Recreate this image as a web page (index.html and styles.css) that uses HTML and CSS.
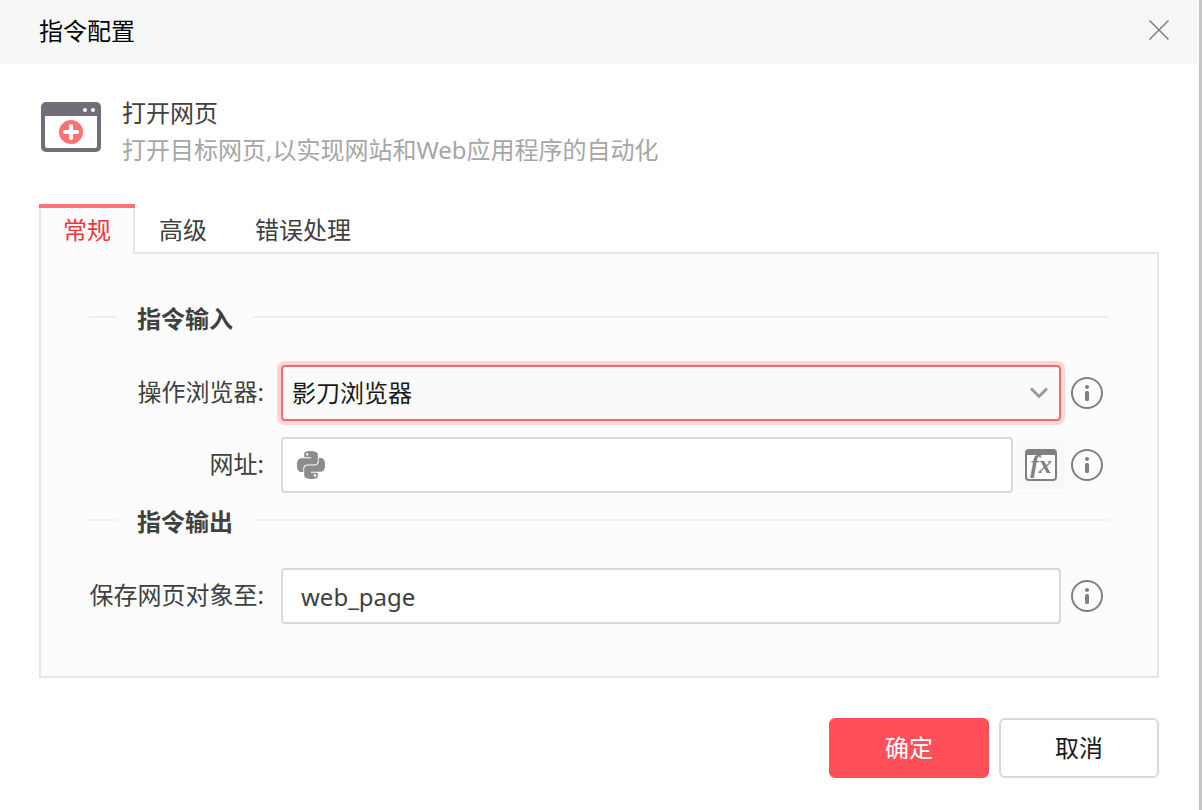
FILE: index.html
```html
<!DOCTYPE html>
<html lang="zh-CN">
<head>
<meta charset="utf-8">
<meta name="viewport" content="width=device-width, initial-scale=1">
<title>指令配置</title>
<link rel="stylesheet" href="styles.css">
</head>
<body>
<svg class="sprite" aria-hidden="true">
  <symbol id="info" viewBox="0 0 32 32">
    <circle cx="16" cy="16" r="15" fill="none" stroke="#808080" stroke-width="2"/>
    <circle cx="16" cy="10" r="2.1" fill="#808080"/>
    <rect x="14" y="14" width="4" height="10" rx="1.6" fill="#808080"/>
  </symbol>
</svg>
<main class="dialog">
  <header class="titlebar">
    <h1 class="titlebar-text">指令配置</h1>
    <button class="icon-button close" type="button" aria-label="关闭">
      <svg width="20" height="20" viewBox="0 0 20 20"><path d="M.5.5l19 19M19.5.5l-19 19" fill="none" stroke="#808080" stroke-width="1.5"/></svg>
    </button>
  </header>

  <form class="content">
    <section class="summary">
      <svg class="summary-icon" width="60" height="50" viewBox="0 0 60 50" aria-hidden="true">
        <rect width="60" height="50" rx="5" fill="#706e78"/>
        <path d="M4 14h52v30q0 2-2 2H6q-2 0-2-2z" fill="#fff"/>
        <circle cx="44" cy="8" r="2" fill="#fff"/><circle cx="52" cy="8" r="2" fill="#fff"/>
        <circle cx="30" cy="30" r="12" fill="#ff7373"/>
        <path d="M30 24v12M24 30h12" stroke="#fff" stroke-width="4" stroke-linecap="round"/>
      </svg>
      <div class="summary-text">
        <h2 class="summary-title">打开网页</h2>
        <p class="summary-desc">打开目标网页,以实现网站和Web应用程序的自动化</p>
      </div>
    </section>

    <div class="tabs" role="tablist">
      <button class="tab tab-active" type="button" role="tab" aria-selected="true">常规</button>
      <button class="tab" type="button" role="tab" aria-selected="false">高级</button>
      <button class="tab" type="button" role="tab" aria-selected="false">错误处理</button>
    </div>

    <div class="panel" role="tabpanel">
      <h3 class="group-title"><span class="group-text">指令输入</span></h3>
      <div class="row">
        <label class="label" for="browser">操作浏览器:</label>
        <div class="select-box">
          <select class="field select" id="browser"><option>影刀浏览器</option></select>
          <svg class="chevron" width="18" height="12" viewBox="0 0 18 12" aria-hidden="true"><path d="M1 1.5l8 8 8-8" fill="none" stroke="#999" stroke-width="2.8"/></svg>
        </div>
        <button class="icon-button info" type="button" aria-label="操作浏览器说明"><svg width="32" height="32"><use href="#info"/></svg></button>
      </div>
      <div class="row">
        <label class="label" for="url">网址:</label>
        <div class="field url-box">
          <svg width="28" height="28" viewBox="0 0 24 24" fill="#8c8c8c" aria-hidden="true"><path d="M14.25.18l.9.2.73.26.59.3.45.32.34.34.25.34.16.33.1.3.04.26.02.2-.01.13V8.5l-.05.63-.13.55-.21.46-.26.38-.3.31-.33.25-.35.19-.35.14-.33.1-.3.07-.26.04-.21.02H8.77l-.69.05-.59.14-.5.22-.41.27-.33.32-.27.35-.2.36-.15.37-.1.35-.07.32-.04.27-.02.21v3.06H3.17l-.21-.03-.28-.07-.32-.12-.35-.18-.36-.26-.36-.36-.35-.46-.32-.59-.28-.73-.21-.88-.14-1.05-.05-1.23.06-1.22.16-1.04.24-.87.32-.71.36-.57.4-.44.42-.33.42-.24.4-.16.36-.1.32-.05.24-.01h.16l.06.01h8.16v-.83H6.18l-.01-2.75-.02-.37.05-.34.11-.31.17-.28.25-.26.31-.23.38-.2.44-.18.51-.15.58-.12.64-.1.71-.06.77-.04.84-.02 1.27.05zm-6.3 1.98l-.23.33-.08.41.08.41.23.34.33.22.41.09.41-.09.33-.22.23-.34.08-.41-.08-.41-.23-.33-.33-.22-.41-.09-.41.09zm13.09 3.95l.28.06.32.12.35.18.36.27.36.35.35.47.32.59.28.73.21.88.14 1.04.05 1.23-.06 1.23-.16 1.04-.24.86-.32.71-.36.57-.4.45-.42.33-.42.24-.4.16-.36.09-.32.05-.24.02-.16-.01h-8.22v.82h5.84l.01 2.76.02.36-.05.34-.11.31-.17.29-.25.25-.31.24-.38.2-.44.17-.51.15-.58.13-.64.09-.71.07-.77.04-.84.01-1.27-.04-1.07-.14-.9-.2-.73-.25-.59-.3-.45-.33-.34-.34-.25-.34-.16-.33-.1-.3-.04-.25-.02-.2.01-.13v-5.34l.05-.64.13-.54.21-.46.26-.38.3-.32.33-.24.35-.2.35-.14.33-.1.3-.06.26-.04.21-.02.13-.01h5.84l.69-.05.59-.14.5-.21.41-.28.33-.32.27-.35.2-.36.15-.36.1-.35.07-.32.04-.28.02-.21V6.07h2.09z"/><circle cx="15.4" cy="20.9" r="1.1" fill="#fff"/></svg>
          <input class="url-input" id="url" type="text">
        </div>
        <button class="icon-button fx" type="button" aria-label="插入表达式">
          <svg width="32" height="32" viewBox="0 0 32 32">
            <rect x="1" y="1" width="30" height="30" rx="3" fill="#fff" stroke="#808080" stroke-width="2"/>
            <path d="M1 6V4q0-3 3-3h24q3 0 3 3v2z" fill="#808080"/>
            <text class="fx-text" x="16" y="24" text-anchor="middle">fx</text>
          </svg>
        </button>
        <button class="icon-button info" type="button" aria-label="网址说明"><svg width="32" height="32"><use href="#info"/></svg></button>
      </div>

      <h3 class="group-title"><span class="group-text">指令输出</span></h3>
      <div class="row">
        <label class="label" for="target">保存网页对象至:</label>
        <input class="field output" id="target" type="text" value="web_page">
        <button class="icon-button info" type="button" aria-label="保存网页对象说明"><svg width="32" height="32"><use href="#info"/></svg></button>
      </div>
    </div>

    <footer class="actions">
      <button class="button button-primary" type="submit">确定</button>
      <button class="button" type="button">取消</button>
    </footer>
  </form>
</main>
</body>
</html>
```
FILE: styles.css
```css
* { box-sizing: border-box; }

body {
  margin: 0;
  background: #fff;
  color: #404040;
  font: 24px/36px "Noto Sans", "Noto Sans CJK SC", sans-serif;
}

button, input, select {
  margin: 0;
  padding: 0;
  border: 0;
  background: none;
  color: inherit;
  font: inherit;
}

h1, h2, h3, p { margin: 0; font-size: 24px; font-weight: 400; }

svg { display: block; flex: none; }

.sprite { position: absolute; width: 0; height: 0; }

.dialog { min-height: 100vh; border-right: 3px solid #c6c6c6; }

.titlebar {
  display: flex;
  align-items: center;
  justify-content: space-between;
  height: 64px;
  padding: 0 30px 4px 39px;
  background: #f7f7f7;
}
.titlebar-text { padding-top: 2px; color: #000; }

.icon-button { display: flex; flex: none; align-items: center; justify-content: center; }

.content { padding: 30px 40px 32px 39px; }

.summary { display: flex; align-items: flex-start; gap: 21px; padding: 0 0 36px 2px; line-height: 37px; }
.summary-icon { margin-top: 8px; }
.summary-desc { color: #a6a6a6; }

.tabs { display: flex; }
.tab { height: 48px; padding: 4px 24px 0; }
.tab-active {
  position: relative;
  z-index: 1;
  height: 50px;
  margin-bottom: -2px;
  padding: 2px 22px 0;
  border: solid #e6e6e6;
  border-width: 0 2px;
  background: #fcfcfc;
  color: #f5333f;
}
.tab-active::before {
  content: "";
  position: absolute;
  top: 0;
  right: -2px;
  left: -2px;
  height: 4px;
  background: #ff7373;
}

.panel { padding: 45px 48px 52px; border: 2px solid #e6e6e6; background: #fcfcfc; }

.group-title { display: flex; align-items: center; gap: 20px; height: 36px; margin-bottom: 30px; font-weight: 700; }
.group-title::before, .group-title::after { content: ""; height: 2px; background: #f0f0f0; }
.group-title::before { width: 28px; }
.group-title::after { flex: 1; }
.group-text { padding-top: 4px; }

.row { display: flex; align-items: center; padding-right: 6px; }
.row + .row { margin-top: 16px; }
.row + .group-title { margin-top: 9px; }
.label { width: 175px; margin-right: 17px; padding-bottom: 2px; text-align: right; white-space: nowrap; }

.field { flex: 1; min-width: 0; height: 56px; border: 2px solid #d9d9d9; border-radius: 4px; background: #fff; }
.select-box { display: flex; flex: 1; position: relative; min-width: 0; }
.select {
  padding: 0 40px 0 9px;
  border-color: #e66e73;
  outline: 0;
  background: #fafafa;
  box-shadow: 0 0 0 4px #ffd6d4;
  color: #1a1a1a;
  appearance: none;
}
.chevron { position: absolute; top: 22px; right: 13px; pointer-events: none; }
.url-box { display: flex; align-items: center; gap: 8px; padding: 0 14px; }
.url-input { flex: 1; min-width: 0; outline: 0; }
.output { padding: 0 18px; }

.info { margin-left: 10px; }
.fx { width: 48px; height: 48px; margin-left: 4px; background: #f8f8f8; }
.fx + .info { margin-left: 6px; }
.fx-text { fill: #808080; font: italic 700 26px "Liberation Serif", serif; }

.actions { display: flex; justify-content: flex-end; gap: 10px; padding-top: 40px; }
.button { width: 160px; height: 60px; border: 2px solid #d9d9d9; border-radius: 6px; background: #fff; color: #1a1a1a; }
.button-primary { border-color: #ff5059; background: #ff5059; color: #fff; }
```
